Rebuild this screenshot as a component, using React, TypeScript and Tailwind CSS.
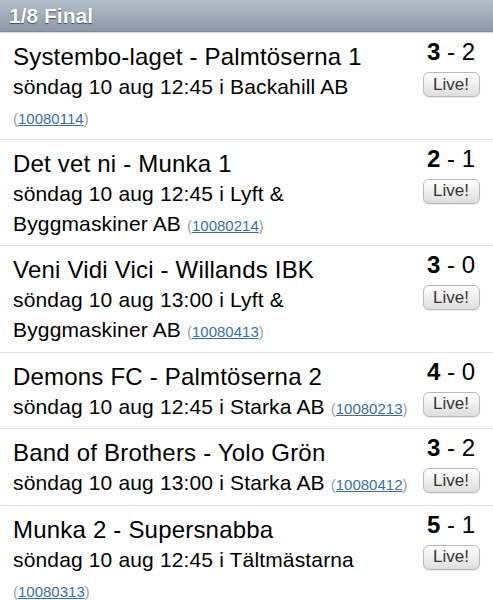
import React from "react";

type Match = {
  title: string;
  when: string;
  place: string;
  id: string;
  home: number;
  away: number;
};

const matches: Match[] = [
  { title: "Systembo-laget - Palmtöserna 1", when: "söndag 10 aug 12:45", place: "Backahill AB", id: "10080114", home: 3, away: 2 },
  { title: "Det vet ni - Munka 1", when: "söndag 10 aug 12:45", place: "Lyft & Byggmaskiner AB", id: "10080214", home: 2, away: 1 },
  { title: "Veni Vidi Vici - Willands IBK", when: "söndag 10 aug 13:00", place: "Lyft & Byggmaskiner AB", id: "10080413", home: 3, away: 0 },
  { title: "Demons FC - Palmtöserna 2", when: "söndag 10 aug 12:45", place: "Starka AB", id: "10080213", home: 4, away: 0 },
  { title: "Band of Brothers - Yolo Grön", when: "söndag 10 aug 13:00", place: "Starka AB", id: "10080412", home: 3, away: 2 },
  { title: "Munka 2 - Supersnabba", when: "söndag 10 aug 12:45", place: "Tältmästarna", id: "10080313", home: 5, away: 1 },
];

const MatchRow = ({ m }: { m: Match }) => (
  <li className="flex border-b border-[#e4e4e4] pl-[13px] pr-[13px] pt-[9px] pb-[6.5px]">
    <div className="min-w-0 flex-1 pr-[6px]">
      <div className="text-[24px] leading-[30px] tracking-[0.2px] text-black">{m.title}</div>
      <div className="text-[21px] leading-[30px] tracking-[0.15px] text-black">
        {m.when} i {m.place}{" "}
        <span className="text-[15px] leading-none tracking-normal text-[#a0a0a0]">
          (<a href="#" className="text-[#3b6ea5] underline">{m.id}</a>)
        </span>
      </div>
    </div>
    <div className="flex w-[58px] shrink-0 flex-col items-center">
      <div className="-mt-[3px] whitespace-nowrap text-[24px] leading-[26px] text-black">
        <span className="font-bold">{m.home}</span> - {m.away}
      </div>
      <button className="mt-[7px] h-[25px] w-[57px] rounded-[6px] border border-[#b9b9b9] bg-gradient-to-b from-[#ffffff] to-[#dedede] text-[17px] leading-[22px] text-[#333] shadow-[0_1px_1px_rgba(0,0,0,0.08)]">
        Live!
      </button>
    </div>
  </li>
);

export default function App() {
  return (
    <div className="h-[600px] w-[493px] overflow-hidden bg-white font-['Liberation_Sans',Arial,sans-serif]">
      <div className="h-[32px] border-b border-[#7d8896] bg-gradient-to-b from-[#b4bfcb] to-[#8d99a8] pl-[9px] text-[21px] font-bold leading-[31px] text-white [text-shadow:0_1px_1px_rgba(40,50,60,0.8)]">
        1/8 Final
      </div>
      <div className="h-px bg-[#d6dbe0]" />
      <ul>
        {matches.map(m => (
          <MatchRow key={m.id} m={m} />
        ))}
      </ul>
    </div>
  );
}
